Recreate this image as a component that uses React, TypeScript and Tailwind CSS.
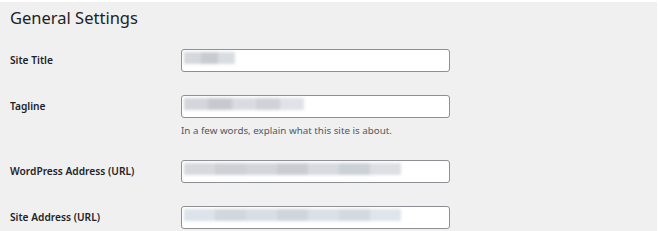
import React from 'react'

const font = { fontFamily: '"Noto Sans", "Open Sans", "Liberation Sans", sans-serif' }

type Row = { label: string; blur: string[]; w: number; help?: string; gapTop: string }

const ROWS: Row[] = [
  { label: 'Site Title', blur: ['#d5d8dc', '#c8ccd1', '#d9dde2'], w: 17, gapTop: 'mt-0' },
  { label: 'Tagline', blur: ['#d3d6da', '#c6cacf', '#d8dce1', '#cfd3d8', '#dfe2e6'], w: 24, help: 'In a few words, explain what this site is about.', gapTop: 'mt-[23px]' },
  { label: 'WordPress Address (URL)', blur: ['#d6d9dd', '#cdd1d6', '#d2d6db', '#c9cdd2', '#d7dbe0', '#ccd1d7', '#dce0e4'], w: 31, gapTop: 'mt-[21px]' },
  { label: 'Site Address (URL)', blur: ['#dde3ea', '#d2d7dd', '#d8dee6', '#cfd5dc', '#dae0e8', '#d3d9e0', '#e0e5eb'], w: 31, gapTop: 'mt-[23px]' },
]

function BlurredValue({ colors, w }: { colors: string[]; w: number }) {
  // the screenshot has the field values pixelated out
  return (
    <div className="absolute left-[2px] top-[-4px] h-[24px] flex items-center blur-[1.5px]">
      {colors.map((c, i) => (
        <div key={i} className="h-[12px]" style={{ backgroundColor: c, width: w }} />
      ))}
    </div>
  )
}

export default function App() {
  return (
    <div className="w-[658px] h-[231px] bg-[#f0f0f1] border-t-2 border-r border-white overflow-hidden text-[#1d2327]" style={font}>
      <h1 className="pl-[10px] pt-[5px] text-[16.5px] leading-[22px] font-normal text-[#1d2327]">General Settings</h1>

      <div className="mt-[20px] flex flex-col">
        {ROWS.map((r, i) => (
          <div key={i} className={`${r.gapTop} grid grid-cols-[181px_269px]`}>
            <div className="pl-[10px] h-[23px] flex items-center text-[10.2px] font-semibold">{r.label}</div>
            <div>
              <div className="relative h-[23px] bg-white border border-[#8c8f94] rounded-[3px] overflow-visible">
                <BlurredValue colors={r.blur} w={r.w} />
              </div>
              {r.help && (
                <p className="mt-[4px] text-[9.8px] leading-[17px] text-[#50575e]">{r.help}</p>
              )}
            </div>
          </div>
        ))}
      </div>
    </div>
  )
}
